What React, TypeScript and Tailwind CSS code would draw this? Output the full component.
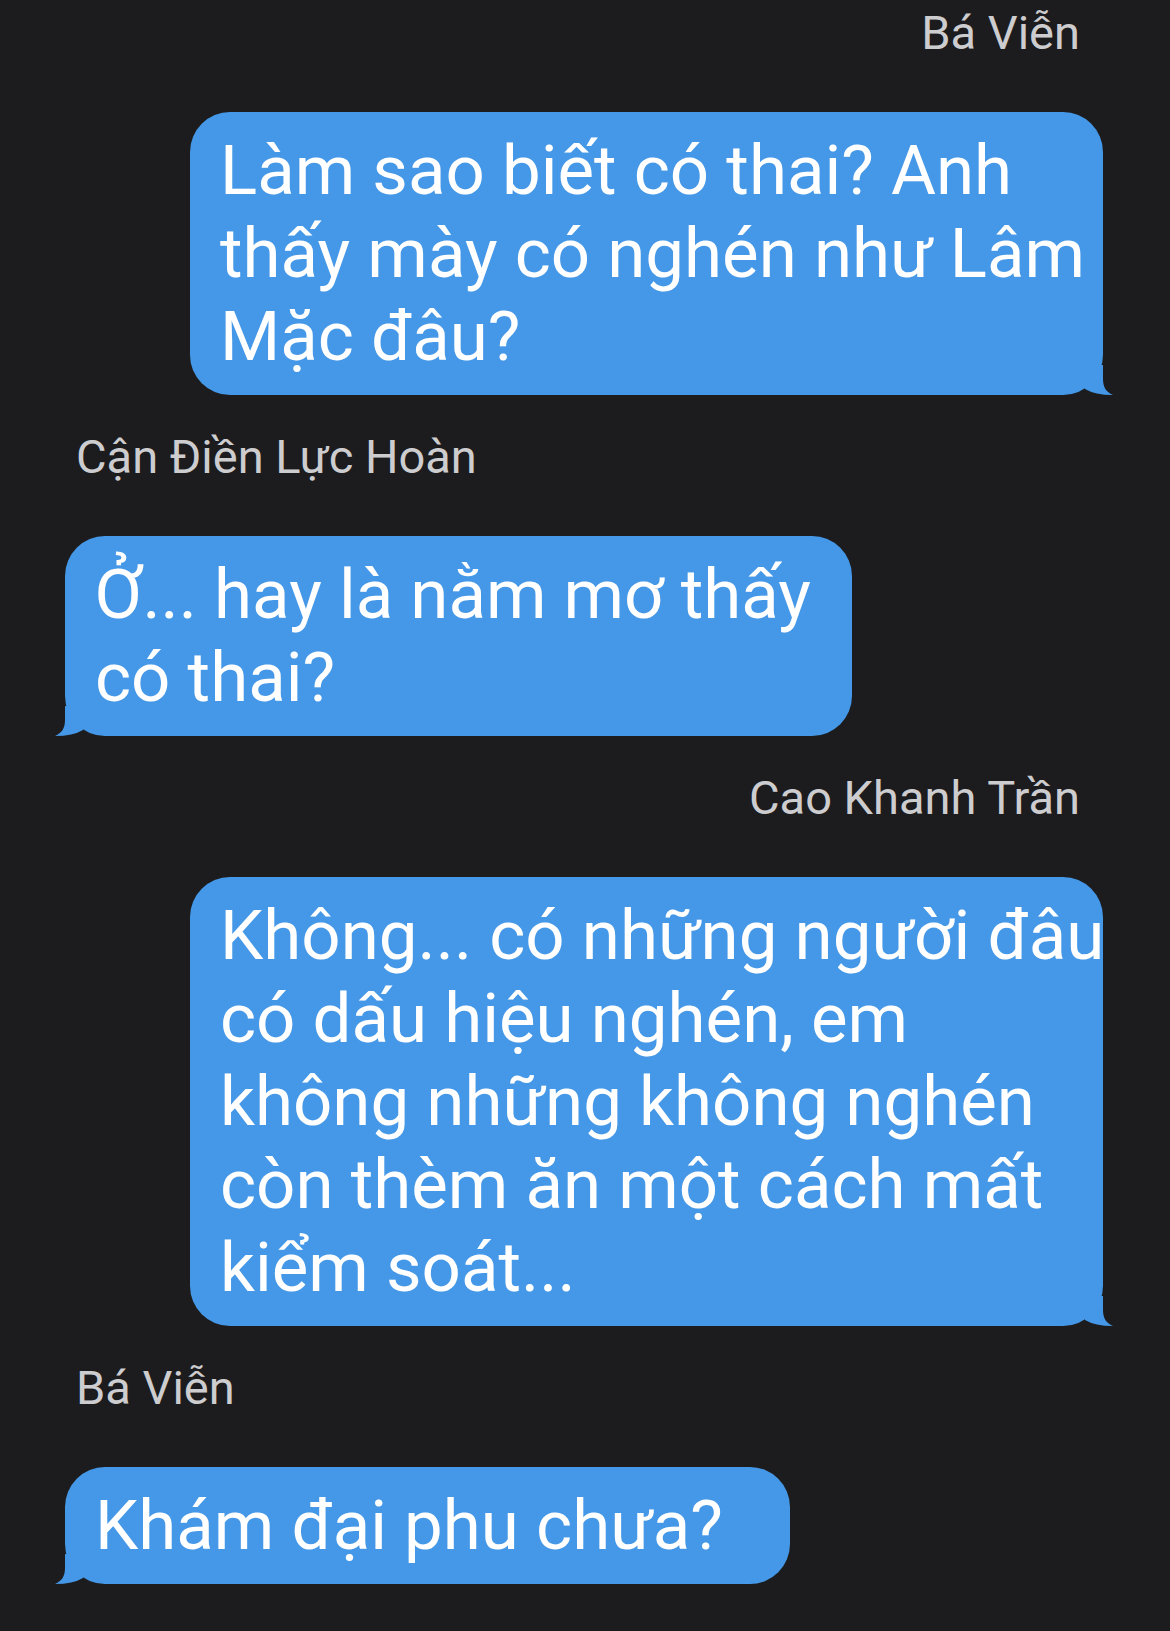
import React from "react";

type Message = {
    name: string;
    side: "left" | "right";
    lines: string[];
    width: string;
};

const messages: Message[] = [
    {
        name: "Bá Viễn",
        side: "right",
        lines: ["Làm sao biết có thai? Anh", "thấy mày có nghén như Lâm", "Mặc đâu?"],
        width: "w-[913px]",
    },
    {
        name: "Cận Điền Lực Hoàn",
        side: "left",
        lines: ["Ở... hay là nằm mơ thấy", "có thai?"],
        width: "w-[787px]",
    },
    {
        name: "Cao Khanh Trần",
        side: "right",
        lines: [
            "Không... có những người đâu",
            "có dấu hiệu nghén, em",
            "không những không nghén",
            "còn thèm ăn một cách mất",
            "kiểm soát...",
        ],
        width: "w-[913px]",
    },
    {
        name: "Bá Viễn",
        side: "left",
        lines: ["Khám đại phu chưa?"],
        width: "w-[725px]",
    },
];

const Tail = ({ side }: { side: "left" | "right" }) =>
    side === "right" ? (
        <svg
            className="absolute -right-[10px] bottom-0 h-[30px] w-[30px]"
            viewBox="0 0 30 30"
        >
            <path d="M2 0 L20 0 L20 14 C20 22 23 27 30 30 Q12 30 2 24 Z" fill="#4598e7" />
        </svg>
    ) : (
        <svg
            className="absolute -left-[10px] bottom-0 h-[30px] w-[30px]"
            viewBox="0 0 30 30"
        >
            <path d="M28 0 L10 0 L10 14 C10 22 7 27 0 30 Q18 30 28 24 Z" fill="#4598e7" />
        </svg>
    );

const Bubble = ({ msg }: { msg: Message }) => {
    const isRight = msg.side === "right";
    return (
        <div className={isRight ? "flex flex-col items-end" : "flex flex-col items-start"}>
            <div
                className={
                    isRight
                        ? "mr-[90px] text-[47px] leading-[56px] text-[#cdcdd0]"
                        : "ml-[76px] text-[47px] leading-[56px] text-[#cdcdd0]"
                }
            >
                {msg.name}
            </div>
            <div
                className={`relative mt-[51px] rounded-[40px] bg-[#4598e7] py-[17px] pl-[30px] text-[69px] leading-[83px] text-white ${msg.width} ${
                    isRight ? "mr-[67px]" : "ml-[65px]"
                }`}
            >
                {msg.lines.map((line, i) => (
                    <div key={i} className="whitespace-nowrap">
                        {line}
                    </div>
                ))}
                <Tail side={msg.side} />
            </div>
        </div>
    );
};

export default function App() {
    return (
        <div className="min-h-[1631px] w-[1170px] overflow-hidden bg-[#1c1c1e] pt-[5px] font-[Roboto,Arial,sans-serif]">
            <div className="flex flex-col gap-[34px]">
                {messages.map((msg, index) => (
                    <Bubble msg={msg} key={index} />
                ))}
            </div>
        </div>
    );
}
